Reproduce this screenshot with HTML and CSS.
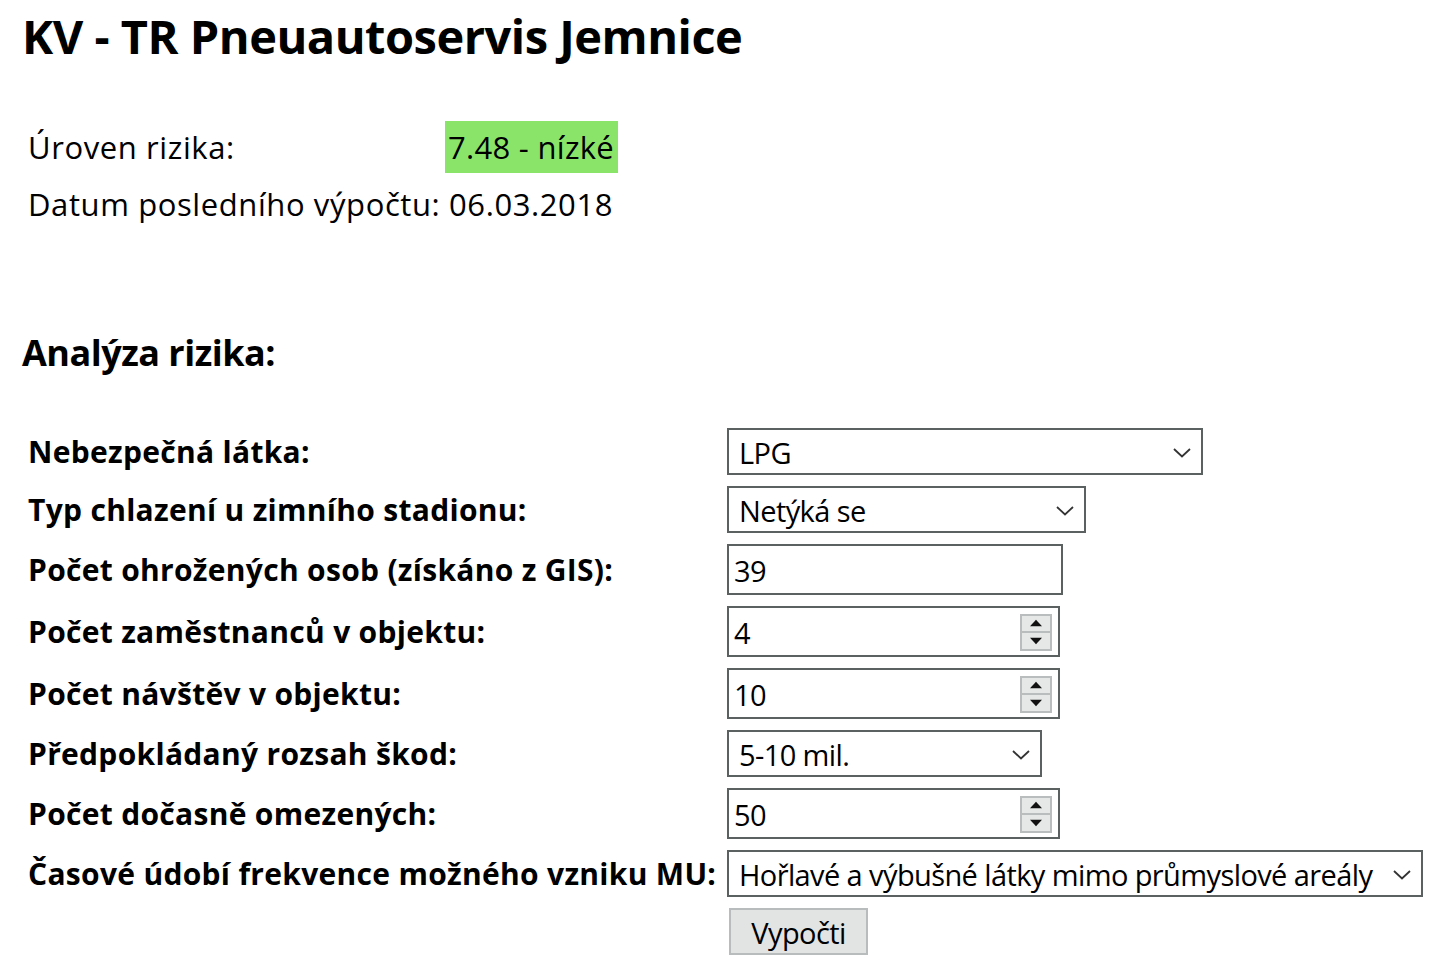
FILE: index.html
```html
<!DOCTYPE html>
<html lang="cs">
<head>
<meta charset="utf-8">
<title>KV - TR Pneuautoservis Jemnice</title>
<link rel="stylesheet" href="styles.css">
</head>
<body>
<main class="page">
  <h1 class="title">KV - TR Pneuautoservis Jemnice</h1>

  <section class="summary">
    <div class="sum-row">
      <span class="sum-label">Úroven rizika:</span>
      <span class="risk-badge">7.48 - nízké</span>
    </div>
    <div class="sum-row">
      <span>Datum posledního výpočtu: 06.03.2018</span>
    </div>
  </section>

  <h2 class="section-title">Analýza rizika:</h2>

  <form class="analysis">
    <label class="field-label">Nebezpečná látka:</label>
    <div class="control select w-476"><span class="value">LPG</span><svg class="chev" viewBox="0 0 18 10"><path d="M1 1 L9 8.5 L17 1" /></svg></div>

    <label class="field-label">Typ chlazení u zimního stadionu:</label>
    <div class="control select w-359"><span class="value">Netýká se</span><svg class="chev" viewBox="0 0 18 10"><path d="M1 1 L9 8.5 L17 1" /></svg></div>

    <label class="field-label">Počet ohrožených osob (získáno z GIS):</label>
    <div class="control input w-336"><span class="value">39</span></div>

    <label class="field-label">Počet zaměstnanců v objektu:</label>
    <div class="control input w-333"><span class="value">4</span>
      <span class="spin"><span class="spin-btn"><svg viewBox="0 0 10 6"><path d="M0.5 5.5 L5 0.5 L9.5 5.5Z"/></svg></span><span class="spin-btn"><svg viewBox="0 0 10 6"><path d="M0.5 0.5 L5 5.5 L9.5 0.5Z"/></svg></span></span>
    </div>

    <label class="field-label">Počet návštěv v objektu:</label>
    <div class="control input w-333"><span class="value">10</span>
      <span class="spin"><span class="spin-btn"><svg viewBox="0 0 10 6"><path d="M0.5 5.5 L5 0.5 L9.5 5.5Z"/></svg></span><span class="spin-btn"><svg viewBox="0 0 10 6"><path d="M0.5 0.5 L5 5.5 L9.5 0.5Z"/></svg></span></span>
    </div>

    <label class="field-label">Předpokládaný rozsah škod:</label>
    <div class="control select w-315"><span class="value">5-10 mil.</span><svg class="chev" viewBox="0 0 18 10"><path d="M1 1 L9 8.5 L17 1" /></svg></div>

    <label class="field-label">Počet dočasně omezených:</label>
    <div class="control input w-333"><span class="value">50</span>
      <span class="spin"><span class="spin-btn"><svg viewBox="0 0 10 6"><path d="M0.5 5.5 L5 0.5 L9.5 5.5Z"/></svg></span><span class="spin-btn"><svg viewBox="0 0 10 6"><path d="M0.5 0.5 L5 5.5 L9.5 0.5Z"/></svg></span></span>
    </div>

    <label class="field-label">Časové údobí frekvence možného vzniku MU:</label>
    <div class="control select w-696"><span class="value">Hořlavé a výbušné látky mimo průmyslové areály</span><svg class="chev" viewBox="0 0 18 10"><path d="M1 1 L9 8.5 L17 1" /></svg></div>

    <span class="field-label"></span>
    <div class="actions"><span class="button">Vypočti</span></div>
  </form>
</main>
</body>
</html>
```

FILE: styles.css
```css
html, body {
  margin: 0;
  padding: 0;
  background: #ffffff;
}

body {
  font-family: "Open Sans", "Noto Sans", "DejaVu Sans", sans-serif;
  color: #000;
}

.page {
  padding: 0 0 0 22px;
}

.title {
  margin: 0;
  padding-top: 6px;
  font-size: 47px;
  font-weight: 700;
  line-height: 60px;
  letter-spacing: -0.5px;
}

.summary {
  margin-top: 55px;
  padding-left: 6px;
  font-size: 31px;
  display: flex;
  flex-direction: column;
  gap: 5px;
  letter-spacing: 0.6px;
}

.sum-row {
  display: flex;
  align-items: center;
  height: 52px;
}

.sum-label {
  width: 417px;
}

.risk-badge {
  background: #8be46a;
  height: 52px;
  line-height: 52px;
  padding: 0 4px 0 3px;
  letter-spacing: 0.3px;
}

.section-title {
  margin: 98px 0 0 0;
  font-size: 36px;
  font-weight: 700;
  line-height: 50px;
  letter-spacing: -0.5px;
}

.analysis {
  margin-top: 50px;
  display: grid;
  grid-template-columns: 699px auto;
  row-gap: 11px;
  align-items: center;
  justify-items: start;
  padding-left: 6px;
}

.field-label {
  font-size: 30px;
  font-weight: 700;
  letter-spacing: 0.3px;
  white-space: nowrap;
}

.control {
  box-sizing: border-box;
  display: flex;
  align-items: center;
  border: 2px solid #5b6060;
  background: #fff;
  font-size: 29px;
  letter-spacing: -0.6px;
  color: #000;
}

.select {
  height: 47px;
  padding: 2px 10px 0 10px;
}

.input {
  height: 51px;
  padding: 1px 6px 0 5px;
}

.value {
  flex: 1;
  white-space: nowrap;
}

.chev {
  width: 18px;
  height: 10px;
  flex: none;
  margin-left: 10px;
}

.chev path {
  fill: none;
  stroke: #333;
  stroke-width: 1.8;
}

.w-476 { width: 476px; }
.w-359 { width: 359px; }
.w-336 { width: 336px; }
.w-333 { width: 333px; }
.w-315 { width: 315px; }
.w-696 { width: 696px; }

.spin {
  display: flex;
  flex-direction: column;
  width: 32px;
  height: 37px;
  border: 2px solid #b9bdbd;
  box-sizing: border-box;
  background: #e6e8e8;
}

.spin-btn {
  flex: 1;
  display: flex;
  align-items: center;
  justify-content: center;
}

.spin-btn + .spin-btn {
  border-top: 2px solid #b9bdbd;
}

.spin-btn svg {
  width: 14px;
  height: 8px;
}

.spin-btn path {
  fill: #111;
}

.actions {
  padding-left: 2px;
}

.button {
  box-sizing: border-box;
  display: flex;
  align-items: center;
  justify-content: center;
  width: 139px;
  height: 47px;
  padding-top: 2px;
  background: #e2e4e4;
  border: 2px solid #b8bcbc;
  font-size: 29px;
  letter-spacing: -0.6px;
}
```
